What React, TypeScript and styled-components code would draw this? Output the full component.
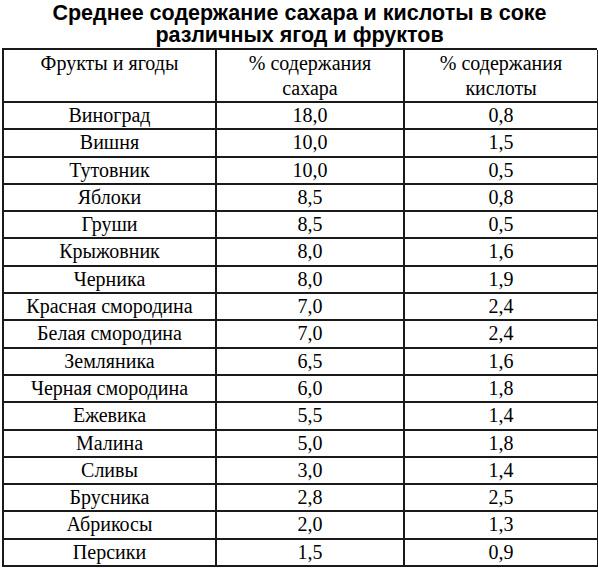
import React from 'react';
import styled, { createGlobalStyle } from 'styled-components';

const GlobalStyle = createGlobalStyle`
  html, body {
    margin: 0;
    padding: 0;
    background: #ffffff;
  }
`;

const Page = styled.div`
  width: 598px;
  padding: 2px 1px 0 2px;
  box-sizing: border-box;
`;

const Title = styled.h1`
  margin: 0;
  font-family: "Liberation Sans", Arial, sans-serif;
  font-weight: bold;
  font-size: 21.5px;
  line-height: 22px;
  text-align: center;
  color: #000;
  height: 46px;
`;

const Grid = styled.div`
  display: grid;
  grid-template-columns: 213px 188px 194px;
  grid-template-rows: 53px;
  grid-auto-rows: 27.3px;
  border-top: 2px solid #1a1a1a;
  border-left: 2px solid #1a1a1a;
  width: 595px;
  box-sizing: border-box;
`;

const Cell = styled.div<{ $head?: boolean }>`
  font-family: "Liberation Serif", serif;
  font-size: 20px;
  color: #000;
  border-right: 2px solid #1a1a1a;
  border-bottom: 2px solid #1a1a1a;
  text-align: center;
  line-height: 25px;
  padding-top: ${p => (p.$head ? '1px' : '0')};
  box-sizing: border-box;
  white-space: nowrap;
`;

const rows: [string, string, string][] = [
  ['Виноград', '18,0', '0,8'],
  ['Вишня', '10,0', '1,5'],
  ['Тутовник', '10,0', '0,5'],
  ['Яблоки', '8,5', '0,8'],
  ['Груши', '8,5', '0,5'],
  ['Крыжовник', '8,0', '1,6'],
  ['Черника', '8,0', '1,9'],
  ['Красная смородина', '7,0', '2,4'],
  ['Белая смородина', '7,0', '2,4'],
  ['Земляника', '6,5', '1,6'],
  ['Черная смородина', '6,0', '1,8'],
  ['Ежевика', '5,5', '1,4'],
  ['Малина', '5,0', '1,8'],
  ['Сливы', '3,0', '1,4'],
  ['Брусника', '2,8', '2,5'],
  ['Абрикосы', '2,0', '1,3'],
  ['Персики', '1,5', '0,9'],
];

export default function App() {
  return (
    <>
      <GlobalStyle />
      <Page>
        <Title>
          Среднее содержание сахара и кислоты в соке
          <br />
          различных ягод и фруктов
        </Title>
        <Grid>
          <Cell $head>Фрукты и ягоды</Cell>
          <Cell $head>
            % содержания
            <br />
            сахара
          </Cell>
          <Cell $head>
            % содержания
            <br />
            кислоты
          </Cell>
          {rows.map(([name, sugar, acid]) => (
            <React.Fragment key={name}>
              <Cell>{name}</Cell>
              <Cell>{sugar}</Cell>
              <Cell>{acid}</Cell>
            </React.Fragment>
          ))}
        </Grid>
      </Page>
    </>
  );
}
